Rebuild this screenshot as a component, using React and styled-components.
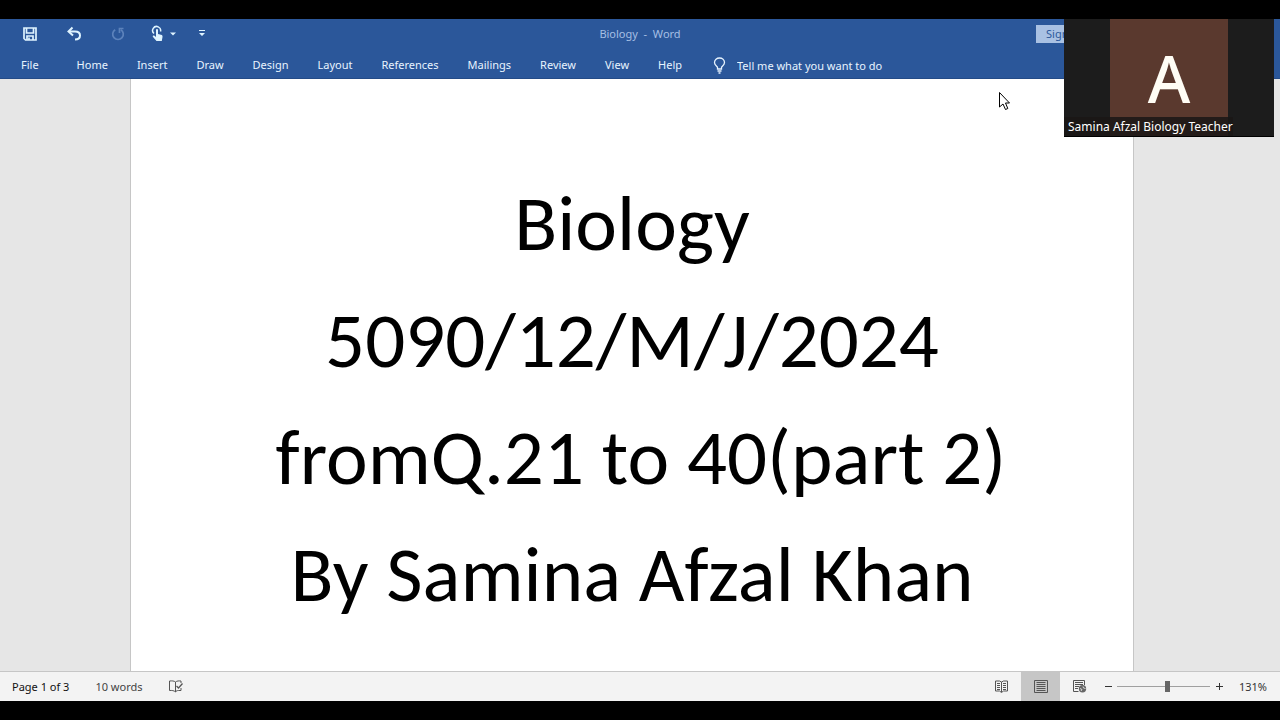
import React, { useState } from 'react';
import styled, { createGlobalStyle } from 'styled-components';

const GlobalStyle = createGlobalStyle`
  * {
    box-sizing: border-box;
  }

  body {
    margin: 0;
    background: #000;
    font-family: "Segoe UI", "Noto Sans", "Open Sans", sans-serif;
    font-size: 11px;
  }

  button,
  input {
    font: inherit;
  }
`;

const Screen = styled.div`
  position: relative;
  display: flex;
  flex-direction: column;
  min-height: 100vh;
  padding: 19px 0;
  background: #000;
`;

const Header = styled.header`
  background: #2b579a;
  border-bottom: 1px solid #244b87;
  color: #e8f4ff;
`;

const TitleBar = styled.div`
  display: grid;
  grid-template-columns: 1fr auto 1fr;
  align-items: center;
  height: 29px;
`;

const QuickAccess = styled.div`
  display: flex;
  align-items: center;
  padding-left: 22px;
`;

const ToolButton = styled.button`
  display: flex;
  align-items: center;
  justify-content: center;
  width: ${(props) => props.$width || 16}px;
  height: 23px;
  margin-right: ${(props) => props.$gap || 0}px;
  padding: 0;
  border: 0;
  background: none;
  color: ${(props) => (props.disabled ? '#5c82bb' : '#dff4ff')};
`;

const DocumentTitle = styled.div`
  color: #a5bfe4;
  white-space: pre;
`;

const SignIn = styled.button`
  justify-self: end;
  width: 72px;
  height: 18px;
  margin-right: 172px;
  padding: 0 10px;
  border: 0;
  background: #a9c1e3;
  color: #2b579a;
  text-align: left;
  white-space: nowrap;
`;

const Ribbon = styled.nav`
  display: flex;
  align-items: center;
  height: 30px;
  padding: 4px 0 0 6px;
`;

const Tab = styled.button`
  height: 26px;
  margin-right: ${(props) => props.$gap || 0}px;
  padding: 0 14px 0 15px;
  border: 0;
  background: none;
  color: inherit;
  line-height: 26px;
`;

const TellMe = styled.label`
  display: flex;
  align-items: center;
  gap: 11px;
  margin-left: 17px;
`;

const TellMeInput = styled.input`
  width: 200px;
  padding: 0;
  border: 0;
  outline: 0;
  background: none;
  color: inherit;

  &::placeholder {
    color: #e8f4ff;
    opacity: 1;
  }
`;

const Workspace = styled.main`
  display: flex;
  flex: 1;
  padding: 0 146px 0 130px;
  background: #e6e6e6;
`;

const Paper = styled.article`
  flex: 1;
  padding: 86px 20px 0;
  border: solid #c6c6c6;
  border-width: 0 1px;
  background: #fff;
`;

const Line = styled.p`
  margin: 0;
  color: #000;
  font-family: Calibri, Carlito, Lato, sans-serif;
  font-size: 79px;
  line-height: 117px;
  text-align: center;
  white-space: pre;
`;

const StatusBar = styled.footer`
  display: flex;
  align-items: center;
  justify-content: space-between;
  height: 30px;
  padding: 0 13px 0 12px;
  border-top: 1px solid #c6c6c6;
  background: #f3f3f3;
  color: #333;
`;

const StatusGroup = styled.div`
  display: flex;
  align-items: center;
`;

const StatusItem = styled.span`
  margin-right: 26px;
  color: ${(props) => (props.$strong ? '#111' : '#444')};
`;

const ViewButton = styled.button`
  display: flex;
  align-items: center;
  justify-content: center;
  width: 39px;
  height: 29px;
  padding: 0;
  border: 0;
  background: ${(props) => (props.$active ? '#c6c6c6' : 'none')};
  color: #555;
`;

const ZoomButton = styled.button`
  display: flex;
  align-items: center;
  justify-content: center;
  width: 18px;
  height: 20px;
  padding: 0;
  border: 0;
  background: none;
  color: #333;
`;

const ZoomSlider = styled.input`
  width: 93px;
  height: 12px;
  margin: 0;
  appearance: none;
  background: linear-gradient(#a0a0a0, #a0a0a0) center / 100% 1px no-repeat;

  &::-webkit-slider-thumb {
    width: 5px;
    height: 11px;
    appearance: none;
    background: #666;
  }
`;

const ZoomValue = styled.output`
  width: 39px;
  text-align: right;
`;

const VideoTile = styled.aside`
  position: absolute;
  top: 19px;
  right: 6px;
  display: flex;
  justify-content: center;
  width: 210px;
  height: 118px;
  border-bottom: 1px solid #000;
  background: #1c1c1c;
`;

const Avatar = styled.div`
  width: 118px;
  background: #5a392e;
  color: #fffdf5;
  font-size: 65px;
  font-weight: 500;
  line-height: 118px;
  text-align: center;
`;

const ParticipantName = styled.div`
  position: absolute;
  bottom: 0;
  left: 0;
  padding: 0 0 0 4px;
  background: rgba(26, 22, 21, 0.85);
  color: #fff;
  font-size: 12px;
  line-height: 19px;
  white-space: nowrap;
`;

const Pointer = styled.svg`
  position: absolute;
  top: 91px;
  left: 998px;
`;

const SaveIcon = () => (
  <svg width="14" height="14" viewBox="0 0 14 14" fill="none" stroke="currentColor" strokeWidth="1.700">
    <path d="M1 1h12v12H2.5L1 11.5zM3.5 1v5h7V1" />
    <path d="M4 13V9h6v4" />
    <path d="M6 10.5V13" />
  </svg>
);

const UndoIcon = () => (
  <svg width="16" height="16" viewBox="0 0 16 16" fill="none" stroke="currentColor" strokeWidth="2">
    <path d="M6.5 1.5L2.5 5.5L7 9.5" />
    <path d="M3 5.5H9C12.5 5.5 14 7.500 14 9.500C14 12 12 13.500 9 13.500" />
  </svg>
);

const RepeatIcon = () => (
  <svg width="14" height="14" viewBox="0 0 14 14" fill="none" stroke="currentColor" strokeWidth="1.700">
    <path d="M4.200 2.700A5.300 5.300 0 1 0 9.800 2.700" />
    <path d="M12.500 1.500H8.500V6" />
  </svg>
);

const TouchIcon = () => (
  <svg width="14" height="17" viewBox="0 0 14 17">
    <path d="M3 8.500A4 4 0 1 1 9.500 6.500" fill="none" stroke="currentColor" strokeWidth="1.500" />
    <path
      d="M5 5.200C5 3.700 7 3.700 7 5.200V9L10 9.700C11.300 10 11.700 10.800 11.500 12L10.800 16H5.500L1.800 11.700C1.500 10.500 2.700 10 3.500 10.800L5 12z"
      fill="currentColor"
    />
  </svg>
);

const CaretIcon = () => (
  <svg width="6" height="4" viewBox="0 0 6 4" fill="currentColor">
    <path d="M0 0.500h6L3 3.500z" />
  </svg>
);

const CustomizeIcon = () => (
  <svg width="6" height="7" viewBox="0 0 6 7" fill="currentColor">
    <path d="M0 0h6v1H0zM0 3h6L3 6z" />
  </svg>
);

const BulbIcon = () => (
  <svg width="13" height="17" viewBox="0 0 13 17" fill="none" stroke="currentColor" strokeWidth="1.300">
    <path d="M4.500 12V10.500C4.500 9 1.500 8.500 1.500 5.500C1.500 2.700 3.800 1 6.500 1S11.500 2.700 11.500 5.500C11.500 8.500 8.500 9 8.500 10.500V12z" />
    <path d="M4.500 14h4M5.500 16h2" />
  </svg>
);

const ProofIcon = () => (
  <svg width="14" height="13" viewBox="0 0 14 13" fill="none" stroke="#555">
    <path d="M6.500 2C5 0.800 3 .8 .5 1V10.500C3 10.300 5 10.500 6.500 12V2C8 0.800 10 .8 12 1V3" />
    <path d="M6.500 12C7 11 8 10.500 9.500 10.500H12V8" />
    <path d="M7.500 6L9.500 8L13.500 3.500" strokeWidth="1.300" />
  </svg>
);

const ReadIcon = () => (
  <svg width="13" height="13" viewBox="0 0 13 13" fill="none" stroke="currentColor">
    <path d="M6.500 2L4.500 1H.5V11H4.500L6.500 12.500L8.500 11H12.500V1H8.500zM6.500 2V12" />
    <path d="M2 3.500h3M2 5.500h3M2 7.500h3M2 9.500h3M8 3.500h3M8 5.500h3M8 7.500h3M8 9.500h3" />
  </svg>
);

const PrintIcon = () => (
  <svg width="14" height="13" viewBox="0 0 14 13" fill="none" stroke="currentColor">
    <path d="M.5 .5h13v12H.5zM2.500 2.500h9M2.500 4.500h9M2.500 6.500h9M2.500 8.500h9M2.500 10.500h9" />
  </svg>
);

const WebIcon = () => (
  <svg width="14" height="13" viewBox="0 0 14 13" fill="none" stroke="currentColor">
    <path d="M5.500 11.500H.5V.5H11.500V5" />
    <path d="M2 2.500h8M2 4.500h8M2 6.500h4M2 8.500h3" />
    <circle cx="9.500" cy="8.700" r="3.700" fill="#666" stroke="none" />
    <path d="M7 8.500l2 1-1 1.500M10 6.500l.5 1.500 2 .5" stroke="#f3f3f3" strokeWidth=".8" />
  </svg>
);

const tabs = ['Home', 'Insert', 'Draw', 'Design', 'Layout', 'References', 'Mailings', 'Review', 'View', 'Help'];

const lines = ['Biology', '5090/12/M/J/2024', ' fromQ.21 to 40(part 2)', 'By Samina Afzal Khan'];

const App = () => {
  const [zoom, setZoom] = useState(131);

  return (
    <Screen>
      <GlobalStyle />
      <Header>
        <TitleBar>
          <QuickAccess>
            <ToolButton $gap={28} aria-label="Save"><SaveIcon /></ToolButton>
            <ToolButton $gap={28} aria-label="Undo"><UndoIcon /></ToolButton>
            <ToolButton $gap={24} aria-label="Repeat" disabled><RepeatIcon /></ToolButton>
            <ToolButton aria-label="Touch mode"><TouchIcon /></ToolButton>
            <ToolButton $gap={16} $width={14} aria-label="Touch mode options"><CaretIcon /></ToolButton>
            <ToolButton $width={12} aria-label="Customize toolbar"><CustomizeIcon /></ToolButton>
          </QuickAccess>
          <DocumentTitle>{'Biology  -  Word'}</DocumentTitle>
          <SignIn>Sign in</SignIn>
        </TitleBar>
        <Ribbon>
          <Tab $gap={9}>File</Tab>
          {tabs.map((tab) => (
            <Tab key={tab}>{tab}</Tab>
          ))}
          <TellMe>
            <BulbIcon />
            <TellMeInput aria-label="Tell me" placeholder="Tell me what you want to do" />
          </TellMe>
        </Ribbon>
      </Header>

      <Workspace>
        <Paper>
          {lines.map((line) => (
            <Line key={line}>{line}</Line>
          ))}
        </Paper>
      </Workspace>

      <StatusBar>
        <StatusGroup>
          <StatusItem $strong>Page 1 of 3</StatusItem>
          <StatusItem>10 words</StatusItem>
          <ProofIcon />
        </StatusGroup>
        <StatusGroup>
          <ViewButton aria-label="Read mode"><ReadIcon /></ViewButton>
          <ViewButton $active aria-label="Print layout"><PrintIcon /></ViewButton>
          <ViewButton aria-label="Web layout"><WebIcon /></ViewButton>
          <ZoomButton aria-label="Zoom out" onClick={() => setZoom(zoom - 10)}>
            <svg width="7" height="7" stroke="currentColor"><path d="M0 3.500h7" /></svg>
          </ZoomButton>
          <ZoomSlider
            type="range"
            min="10"
            max="230"
            aria-label="Zoom"
            value={zoom}
            onChange={(e) => setZoom(Number(e.target.value))}
          />
          <ZoomButton aria-label="Zoom in" onClick={() => setZoom(zoom + 10)}>
            <svg width="7" height="7" stroke="currentColor"><path d="M0 3.500h7M3.500 0v7" /></svg>
          </ZoomButton>
          <ZoomValue>{zoom}%</ZoomValue>
        </StatusGroup>
      </StatusBar>

      <VideoTile>
        <Avatar>A</Avatar>
        <ParticipantName>Samina Afzal Biology Teacher</ParticipantName>
      </VideoTile>

      <Pointer width="13" height="20" viewBox="0 0 13 20" fill="#fff" stroke="#000">
        <path d="M1.500 1.500V16L5 13L7.500 18.500L9.800 17.500L7.500 12H11.500z" />
      </Pointer>
    </Screen>
  );
};

export default App;
